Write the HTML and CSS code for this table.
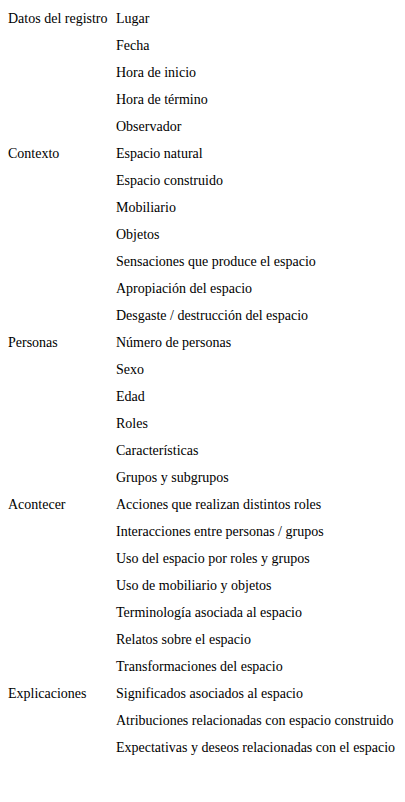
FILE: index.html
```html
<!DOCTYPE html>
<html lang="es">
<head>
<meta charset="utf-8">
<link rel="stylesheet" href="styles.css">
</head>
<body>
<div class="grid">
  <div class="cat">Datos del registro</div><div class="item">Lugar</div>
  <div class="cat"></div><div class="item">Fecha</div>
  <div class="cat"></div><div class="item">Hora de inicio</div>
  <div class="cat"></div><div class="item">Hora de término</div>
  <div class="cat"></div><div class="item">Observador</div>
  <div class="cat">Contexto</div><div class="item">Espacio natural</div>
  <div class="cat"></div><div class="item">Espacio construido</div>
  <div class="cat"></div><div class="item">Mobiliario</div>
  <div class="cat"></div><div class="item">Objetos</div>
  <div class="cat"></div><div class="item">Sensaciones que produce el espacio</div>
  <div class="cat"></div><div class="item">Apropiación del espacio</div>
  <div class="cat"></div><div class="item">Desgaste / destrucción del espacio</div>
  <div class="cat">Personas</div><div class="item">Número de personas</div>
  <div class="cat"></div><div class="item">Sexo</div>
  <div class="cat"></div><div class="item">Edad</div>
  <div class="cat"></div><div class="item">Roles</div>
  <div class="cat"></div><div class="item">Características</div>
  <div class="cat"></div><div class="item">Grupos y subgrupos</div>
  <div class="cat">Acontecer</div><div class="item">Acciones que realizan distintos roles</div>
  <div class="cat"></div><div class="item">Interacciones entre personas / grupos</div>
  <div class="cat"></div><div class="item">Uso del espacio por roles y grupos</div>
  <div class="cat"></div><div class="item">Uso de mobiliario y objetos</div>
  <div class="cat"></div><div class="item">Terminología asociada al espacio</div>
  <div class="cat"></div><div class="item">Relatos sobre el espacio</div>
  <div class="cat"></div><div class="item">Transformaciones del espacio</div>
  <div class="cat">Explicaciones</div><div class="item">Significados asociados al espacio</div>
  <div class="cat"></div><div class="item">Atribuciones relacionadas con espacio construido</div>
  <div class="cat"></div><div class="item">Expectativas y deseos relacionadas con el espacio</div>
</div>
</body>
</html>
```
FILE: styles.css
```css
html, body {
  background: #fff;
}
body {
  margin: 0;
  padding: 5px 8px;
  font-family: "Liberation Serif", "Times New Roman", serif;
  font-size: 14px;
  color: #000;
}
.grid {
  display: grid;
  grid-template-columns: 108px auto;
  grid-auto-rows: 27px;
  align-items: center;
}
.cat, .item {
  white-space: nowrap;
  line-height: 16px;
}
```
